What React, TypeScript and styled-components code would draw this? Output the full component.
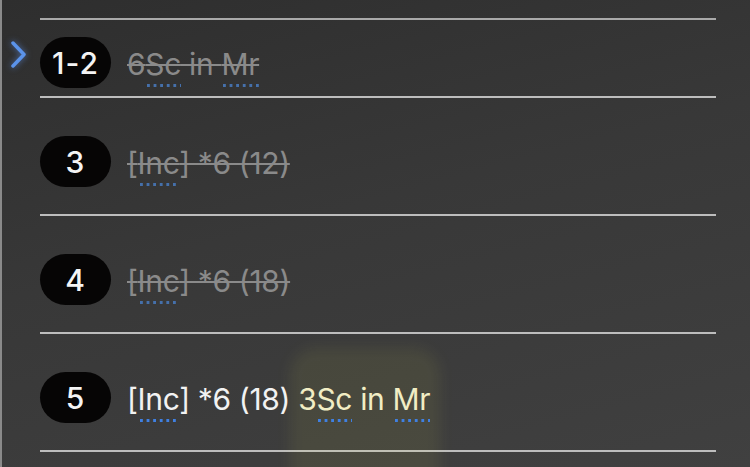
import React from "react";
import styled, { createGlobalStyle } from "styled-components";

const Global = createGlobalStyle`
  html, body { margin: 0; padding: 0; background: #363636; }
  body { font-family: Inter, "Noto Sans", sans-serif; }
`;

const Page = styled.div`
  position: relative;
  box-sizing: border-box;
  width: 750px;
  height: 467px;
  overflow: hidden;
  padding: 18px 34px 0 38px;
  border-left: 2px solid #8a8a8a;
  background: linear-gradient(165deg, #2e2e2e 0%, #383838 45%, #404040 100%);
`;

const List = styled.div`
  display: flex;
  flex-direction: column;
  border-top: 2px solid #a9a9a9;
`;

const Row = styled.div<{ $compact?: boolean }>`
  position: relative;
  display: flex;
  align-items: center;
  gap: 16px;
  padding: ${(p) => (p.$compact ? "17px 0 8px" : "38px 0 27px")};
  border-bottom: 2px solid #bdbdbd;
`;

const Pill = styled.div`
  flex: none;
  width: 71px;
  height: 51px;
  border-radius: 26px;
  background: #060505;
  color: #f4f4f4;
  font-size: 30px;
  font-weight: 500;
  display: flex;
  align-items: center;
  justify-content: center;
  letter-spacing: 1px;
`;

const Text = styled.div<{ $done?: boolean }>`
  position: relative;
  z-index: 1;
  font-size: 30px;
  font-weight: 400;
  letter-spacing: -0.35px;
  white-space: pre;
  margin-top: 2px;
  color: ${(p) => (p.$done ? "#8a8a8a" : "#f2f2f2")};
  text-decoration: ${(p) => (p.$done ? "line-through" : "none")};
  text-decoration-thickness: 2px;
  text-decoration-color: #8a8a8a;
`;

const Abbr = styled.span<{ $done?: boolean }>`
  padding-bottom: 5px;
  background-image: linear-gradient(
    to right,
    ${(p) => (p.$done ? "#4570ab" : "#3f80e2")} 50%,
    transparent 50%
  );
  background-size: 6.6px 3px;
  background-repeat: repeat-x;
  background-position: 2px 100%;
`;

const Note = styled.span`
  color: #f1edc4;
`;

const Highlight = styled.div`
  position: absolute;
  left: 250px;
  top: 14px;
  width: 150px;
  height: 150px;
  border-radius: 26px;
  background: rgba(235, 235, 90, 0.07);
  filter: blur(7px);
`;

const Marker = styled.svg`
  position: absolute;
  left: -31px;
  top: 20px;
  width: 19px;
  height: 29px;
  filter: drop-shadow(0 0 3px rgba(90, 140, 230, 0.7));
`;

export default function App() {
  return (
    <>
      <Global />
      <Page>
        <List>
          <Row $compact>
            <Marker viewBox="0 0 19 29">
              <polyline
                points="4,3 15,14.5 4,26"
                fill="none"
                stroke="#5b93ea"
                strokeWidth="3.5"
                strokeLinecap="round"
                strokeLinejoin="round"
              />
            </Marker>
            <Pill>1-2</Pill>
            <Text $done>
              6<Abbr $done>Sc</Abbr> in <Abbr $done>Mr</Abbr>
            </Text>
          </Row>
          <Row>
            <Pill>3</Pill>
            <Text $done>
              [<Abbr $done>Inc</Abbr>] *6 (12)
            </Text>
          </Row>
          <Row>
            <Pill>4</Pill>
            <Text $done>
              [<Abbr $done>Inc</Abbr>] *6 (18)
            </Text>
          </Row>
          <Row>
            <Highlight />
            <Pill>5</Pill>
            <Text>
              [<Abbr>Inc</Abbr>] *6 (18){" "}
              <Note>
                3<Abbr>Sc</Abbr> in <Abbr>Mr</Abbr>
              </Note>
            </Text>
          </Row>
        </List>
      </Page>
    </>
  );
}
